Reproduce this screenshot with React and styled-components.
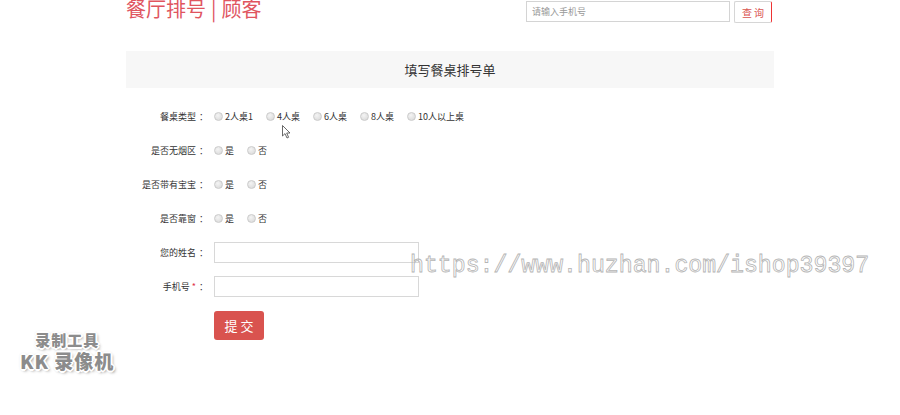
import React from "react";
import styled, { createGlobalStyle } from "styled-components";

const GlobalStyle = createGlobalStyle`
  html, body {
    margin: 0;
    padding: 0;
    background: #fff;
  }
  body {
    font-family: "Noto Sans CJK SC", "Liberation Sans", sans-serif;
    color: #333;
  }
`;

const Page = styled.div`
  position: relative;
  width: 900px;
  height: 415px;
  overflow: hidden;
`;

const Container = styled.div`
  width: 648px;
  margin: 0 auto;
`;

const TopBar = styled.header`
  height: 51px;
  display: flex;
  justify-content: space-between;
  align-items: flex-start;
`;

const Brand = styled.h1`
  margin: -5px 0 0;
  font-size: 20px;
  font-weight: 400;
  line-height: 28px;
  color: #e0555f;
`;

const Sep = styled.span`
  margin: 0 5px;
`;

const Search = styled.form`
  display: flex;
  gap: 4px;
  padding-top: 1px;
  margin-right: 2px;
`;

const SearchInput = styled.input`
  box-sizing: border-box;
  width: 204px;
  height: 21px;
  padding: 0 5px;
  border: 1px solid #d4d4d4;
  font-family: inherit;
  font-size: 9px;
  color: #555;
  outline: none;
  &::placeholder {
    color: #999;
  }
`;

const SearchButton = styled.button`
  box-sizing: border-box;
  width: 38px;
  height: 22px;
  padding: 0 0 0 2px;
  border: 1px solid #d6d6d6;
  border-right: 1px solid #e33;
  border-radius: 2px;
  background: #fff;
  font-family: inherit;
  font-size: 10px;
  color: #d9534f;
  letter-spacing: 2px;
`;

const PanelHeading = styled.div`
  height: 37px;
  display: flex;
  align-items: center;
  justify-content: center;
  background: #f7f7f7;
  font-size: 13px;
  color: #333;
`;

const Form = styled.form`
  display: grid;
  grid-template-columns: 82px 1fr;
  grid-auto-rows: 34px;
  column-gap: 6px;
  padding-top: 11px;
  align-items: center;
`;

const Label = styled.label`
  text-align: right;
  font-size: 9px;
  color: #333;
  white-space: nowrap;
`;

const Colon = styled.span`
  margin-left: 3px;
`;

const Required = styled.span`
  color: #e0304a;
  margin-left: 2px;
`;

const Options = styled.div`
  display: flex;
  align-items: center;
  gap: ${(p) => p.$gap || 13}px;
`;

const Option = styled.label`
  display: flex;
  align-items: center;
  gap: 2px;
  font-size: 9px;
  color: #333;
  white-space: nowrap;
`;

const Radio = styled.input.attrs({ type: "radio" })`
  appearance: none;
  box-sizing: border-box;
  width: 9px;
  height: 9px;
  margin: 0;
  border: 1px solid #cbcbcb;
  border-radius: 50%;
  background: radial-gradient(circle at 40% 35%, #f4f4f4, #d6d6d6);
`;

const TextInput = styled.input`
  box-sizing: border-box;
  width: 205px;
  height: 21px;
  border: 1px solid #d8d8d8;
  outline: none;
  font-family: inherit;
  font-size: 10px;
`;

const Submit = styled.button`
  grid-column: 2;
  justify-self: start;
  align-self: start;
  margin-top: 8px;
  width: 50px;
  height: 29px;
  border: none;
  border-radius: 3px;
  background: #d9534f;
  color: #fff;
  font-family: inherit;
  font-size: 13px;
  letter-spacing: 3px;
  padding: 0 0 0 3px;
`;

const UrlMark = styled.div`
  position: absolute;
  left: 410px;
  top: 251px;
  font-family: "Liberation Mono", monospace;
  font-size: 23.2px;
  line-height: 30px;
  color: transparent;
  -webkit-text-stroke: 0.8px #b4b4b4;
  white-space: nowrap;
  pointer-events: none;
`;

const RecorderMark = styled.div`
  position: absolute;
  left: 20px;
  top: 330px;
  display: flex;
  flex-direction: column;
  align-items: center;
  font-family: "Noto Sans CJK SC", sans-serif;
  font-weight: 900;
  color: #8c8c8c;
  text-shadow: 1px 1px 0 #fff, -1px -1px 0 #fff, 1px -1px 0 #fff,
    -1px 1px 0 #fff, 2px 0 0 #fff, -2px 0 0 #fff, 0 2px 0 #fff, 0 -2px 0 #fff,
    0 0 3px #999, 2px 2px 3px #999;
  pointer-events: none;
`;

const MarkLine = styled.span`
  font-size: ${(p) => p.$size}px;
  line-height: ${(p) => p.$line}px;
  letter-spacing: 1px;
  white-space: nowrap;
`;

const Cursor = styled.svg`
  position: absolute;
  left: 282px;
  top: 125px;
`;

const choice = (name, items, gap) => (
  <Options $gap={gap}>
    {items.map((t) => (
      <Option key={t}>
        <Radio name={name} />
        {t}
      </Option>
    ))}
  </Options>
);

export default function App() {
  return (
    <Page>
      <GlobalStyle />
      <Container>
        <TopBar>
          <Brand>
            餐厅排号<Sep>|</Sep>顾客
          </Brand>
          <Search onSubmit={(e) => e.preventDefault()}>
            <SearchInput placeholder="请输入手机号" />
            <SearchButton type="submit">查询</SearchButton>
          </Search>
        </TopBar>
        <PanelHeading>填写餐桌排号单</PanelHeading>
        <Form onSubmit={(e) => e.preventDefault()}>
          <Label>
            餐桌类型<Colon>：</Colon>
          </Label>
          {choice("table", ["2人桌1", "4人桌", "6人桌", "8人桌", "10人以上桌"], 13)}
          <Label>
            是否无烟区<Colon>：</Colon>
          </Label>
          {choice("smoke", ["是", "否"], 13)}
          <Label>
            是否带有宝宝<Colon>：</Colon>
          </Label>
          {choice("baby", ["是", "否"], 13)}
          <Label>
            是否靠窗<Colon>：</Colon>
          </Label>
          {choice("window", ["是", "否"], 13)}
          <Label>
            您的姓名<Colon>：</Colon>
          </Label>
          <TextInput />
          <Label>
            手机号<Required>*</Required>
            <Colon>：</Colon>
          </Label>
          <TextInput />
          <Submit type="submit">提交</Submit>
        </Form>
      </Container>

      <Cursor width="10" height="14" viewBox="0 0 10 14">
        <path d="M0.5 0.5 L0.5 11 L3 8.6 L5 13 L6.6 12.3 L4.7 8 L8 8 Z" fill="#fff" stroke="#444" strokeWidth="0.8" />
      </Cursor>

      <UrlMark>https://www.huzhan.com/ishop39397</UrlMark>
      <RecorderMark>
        <MarkLine $size={15} $line={19}>录制工具</MarkLine>
        <MarkLine $size={19} $line={23}>KK 录像机</MarkLine>
      </RecorderMark>
    </Page>
  );
}
